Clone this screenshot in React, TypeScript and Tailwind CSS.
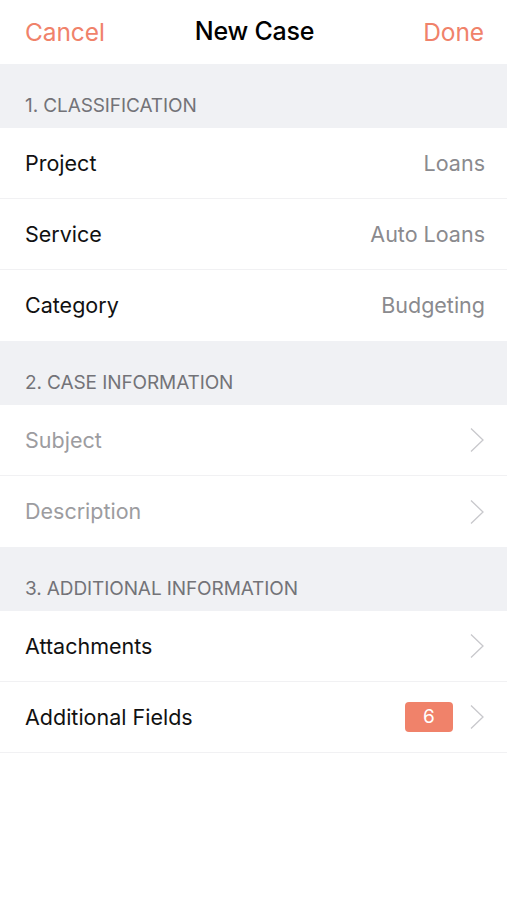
import { ReactNode } from "react";

const Chevron = () => (
  <svg width="16" height="26" viewBox="0 0 16 26" fill="none" className="shrink-0">
    <path d="M2 1.5 L14 13 L2 24.5" stroke="#c8c8cc" strokeWidth="1.3" />
  </svg>
);

const SectionHeader = ({ title }: { title: string }) => (
  <div className="h-[64px] bg-[#f0f1f4] flex items-end px-[25px] pb-[8px]">
    <span className="text-[19px] text-[#737378] tracking-[-0.1px] uppercase">{title}</span>
  </div>
);

const Row = ({
  label,
  value,
  muted,
  chevron,
  badge,
  last,
}: {
  label: string;
  value?: string;
  muted?: boolean;
  chevron?: boolean;
  badge?: ReactNode;
  last?: boolean;
}) => (
  <div
    className={`h-[71px] flex items-center pl-[25px] pr-[22px] ${
      last ? "" : "border-b border-[#f1f1f3]"
    }`}
  >
    <span className={`flex-1 text-[21.5px] ${muted ? "text-[#9c9ca0]" : "text-[#111]"}`}>{label}</span>
    {value && <span className="text-[21.5px] text-[#8a8a8e]">{value}</span>}
    {badge}
    {chevron && (
      <span className="ml-[16px] flex items-center">
        <Chevron />
      </span>
    )}
  </div>
);

export default function App() {
  return (
    <div className="w-[507px] h-[900px] bg-white" style={{ fontFamily: "Inter, 'Liberation Sans', sans-serif" }}>
      <div className="h-[64px] grid grid-cols-[1fr_auto_1fr] items-center px-[23px] pl-[25px]">
        <span className="text-[24.5px] text-[#f0826a] tracking-[-0.1px]">Cancel</span>
        <span className="text-[25px] text-black font-medium tracking-[-0.2px]">New Case</span>
        <span className="text-[24.5px] text-[#f0826a] tracking-[-0.1px] text-right">Done</span>
      </div>

      <SectionHeader title="1. Classification" />
      <Row label="Project" value="Loans" />
      <Row label="Service" value="Auto Loans" />
      <Row label="Category" value="Budgeting" last />

      <SectionHeader title="2. Case Information" />
      <Row label="Subject" muted chevron />
      <Row label="Description" muted chevron last />

      <SectionHeader title="3. Additional Information" />
      <Row label="Attachments" chevron />
      <Row
        label="Additional Fields"
        chevron
        badge={
          <span className="w-[48px] h-[30px] rounded-[4px] bg-[#f0826a] text-white text-[19px] flex items-center justify-center">
            6
          </span>
        }
      />
    </div>
  );
}
